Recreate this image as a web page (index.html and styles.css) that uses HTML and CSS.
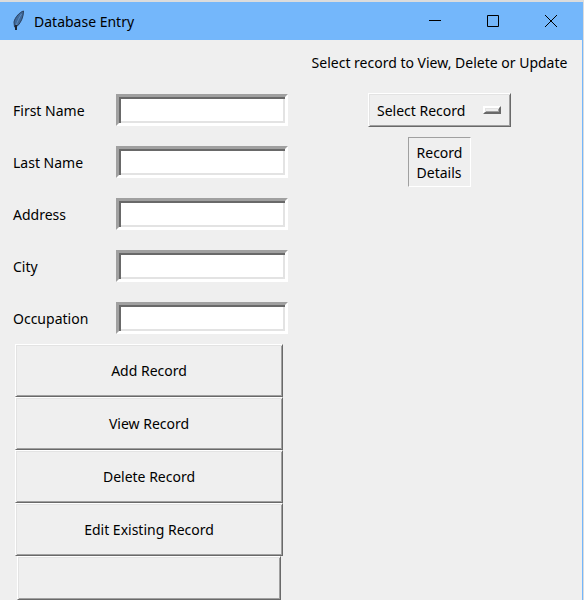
FILE: index.html
```html
<!DOCTYPE html>
<html lang="en">
<head>
<meta charset="utf-8">
<title>Database Entry</title>
<link rel="stylesheet" href="styles.css">
</head>
<body>
<div class="window">
  <header class="titlebar">
    <svg class="feather" viewBox="0 0 16 22" aria-hidden="true">
      <path d="M12.500 1C9 2 4 7 3 12L3.500 17L7 15.500C10 12 12.500 7 12.500 1Z" fill="#3f6a9c" stroke="#2b3f5c" stroke-width="1"/>
      <path d="M10.500 4C8.500 7 6.500 11 5 16" fill="none" stroke="#5f8dc0" stroke-width="1"/>
      <path d="M5 15L5 20" stroke="#1c2430" stroke-width="2"/>
    </svg>
    <h1 class="title">Database Entry</h1>
    <button class="control" type="button" aria-label="Minimize"><svg class="glyph" viewBox="0 0 12 12"><path d="M0 5.5H12"/></svg></button>
    <button class="control" type="button" aria-label="Maximize"><svg class="glyph" viewBox="0 0 12 12"><path d="M.5 .5H11.5V11.5H.5Z"/></svg></button>
    <button class="control" type="button" aria-label="Close"><svg class="glyph" viewBox="0 0 12 12"><path d="M0 0L12 12M12 0L0 12"/></svg></button>
  </header>
  <main class="content">
    <form class="entry">
      <div class="fields">
        <label for="first">First Name</label><input id="first" type="text">
        <label for="last">Last Name</label><input id="last" type="text">
        <label for="address">Address</label><input id="address" type="text">
        <label for="city">City</label><input id="city" type="text">
        <label for="occupation">Occupation</label><input id="occupation" type="text">
      </div>
      <div class="actions">
        <button class="action" type="button">Add Record</button>
        <button class="action" type="button">View Record</button>
        <button class="action" type="button">Delete Record</button>
        <button class="action" type="button">Edit Existing Record</button>
        <button class="action blank" type="button" aria-label="Blank"></button>
      </div>
    </form>
    <section class="records">
      <label class="prompt" for="record">Select record to View, Delete or Update</label>
      <div class="picker">
        <select id="record"><option>Select Record</option></select>
        <span class="indicator"></span>
      </div>
      <p class="details">Record<br>Details</p>
    </section>
  </main>
</div>
</body>
</html>
```
FILE: styles.css
```css
* { box-sizing: border-box; }

body {
  margin: 0;
  padding: 2px 1px 0 0;
  background: #dcdcdc;
  color: #000;
  font: 14px/20px "Noto Sans", "Open Sans", sans-serif;
  overflow: hidden;
}

button, input, select { font: inherit; color: inherit; }

.window {
  display: flex;
  flex-direction: column;
  min-height: calc(100vh - 2px);
  background: #efefef;
}

.titlebar {
  display: flex;
  align-items: center;
  height: 38px;
  padding-left: 11px;
  background: #74b7fb;
}

.feather { width: 16px; height: 22px; }

.title {
  flex: 1;
  margin: 0 0 0 7px;
  padding-top: 2px;
  font-size: 14px;
  font-weight: 400;
}

.control {
  display: flex;
  align-items: center;
  justify-content: center;
  width: 58px;
  height: 38px;
  padding: 0 6px 0 0;
  border: 0;
  background: none;
}

.glyph {
  width: 12px;
  height: 12px;
  fill: none;
  stroke: #000;
}

.content {
  flex: 1;
  display: flex;
  justify-content: space-between;
  border-right: 1px solid #74b7fb;
}

.entry { padding: 44px 0 0 13px; }

.fields {
  display: grid;
  grid-template-columns: 103px 172px;
  grid-auto-rows: 52px;
  align-items: center;
}

.fields label { padding-top: 2px; }

.fields input {
  width: 100%;
  height: 32px;
  padding: 0 4px;
  border: 3px solid;
  border-color: #a0a0a0 #fff #fff #a0a0a0;
  background: #fff;
  box-shadow: inset 2px 2px #696969, inset -2px -2px #e3e3e3;
}

.actions {
  display: flex;
  flex-direction: column;
  width: 268px;
  margin-left: 2px;
}

.action, .picker select {
  border: 1px solid;
  border-color: #fff #696969 #696969 #fff;
  border-radius: 0;
  background: #efefef;
  box-shadow: inset 1px 1px #e3e3e3, inset -1px -1px #a0a0a0;
}

.action { height: 53px; }

.blank { height: 44px; margin: 0 2px; }

.records {
  display: flex;
  flex-direction: column;
  align-items: center;
  min-width: 275px;
  padding: 13px 10px 0 0;
}

.prompt { margin-bottom: 20px; }

.picker { position: relative; }

.picker select {
  display: block;
  appearance: none;
  width: 143px;
  height: 34px;
  padding: 2px 34px 0 8px;
}

.indicator {
  position: absolute;
  right: 10px;
  top: 13px;
  width: 18px;
  height: 8px;
  border: 2px solid;
  border-color: #fff #696969 #696969 #fff;
  box-shadow: inset 1px 1px #e3e3e3, inset -1px -1px #a0a0a0;
  pointer-events: none;
}

.details {
  margin: 10px 0 0;
  padding: 5px 8px 3px;
  border: 1px solid;
  border-color: #a0a0a0 #fff #fff #a0a0a0;
}
```
